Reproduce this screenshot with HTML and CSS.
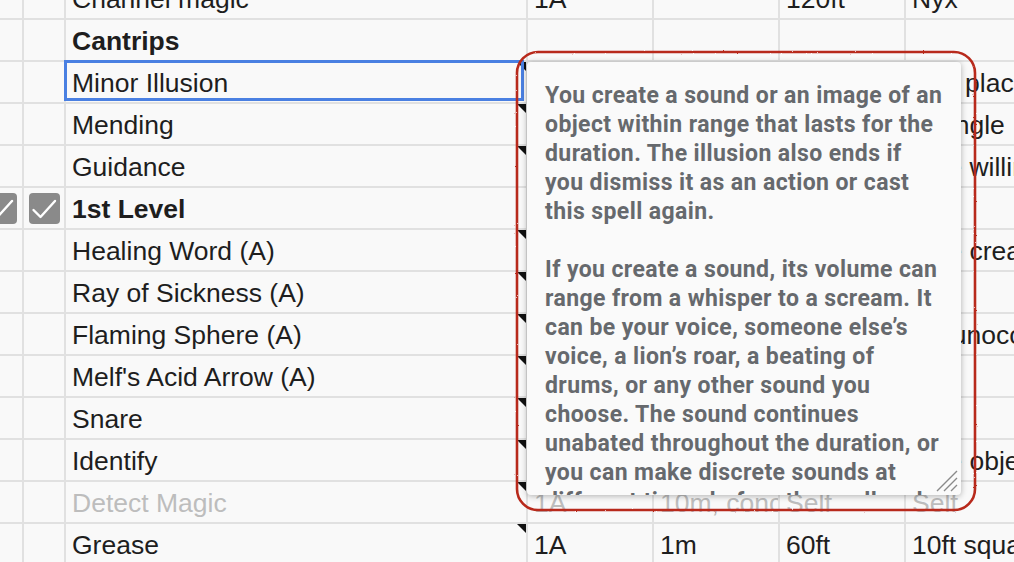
FILE: index.html
```html
<!DOCTYPE html>
<html>
<head>
<meta charset="utf-8">
<title>Spells</title>
<link rel="stylesheet" href="styles.css">
</head>
<body>
<div class="sheet">
  <div class="row">
    <div class="cell"></div><div class="cell"></div>
    <div class="cell">Channel magic</div>
    <div class="cell">1A</div><div class="cell"></div><div class="cell">120ft</div><div class="cell">Nyx</div>
  </div>
  <div class="row">
    <div class="cell"></div><div class="cell"></div>
    <div class="cell bold">Cantrips</div>
    <div class="cell"></div><div class="cell"></div><div class="cell"></div><div class="cell"></div>
  </div>
  <div class="row">
    <div class="cell"></div><div class="cell"></div>
    <div class="cell selected has-note">Minor Illusion</div>
    <div class="cell">1A</div><div class="cell">1m</div><div class="cell">30ft</div><div class="cell">Any place</div>
  </div>
  <div class="row">
    <div class="cell"></div><div class="cell"></div>
    <div class="cell has-note">Mending</div>
    <div class="cell">1m</div><div class="cell">Inst</div><div class="cell">Touch</div><div class="cell">A single</div>
  </div>
  <div class="row">
    <div class="cell"></div><div class="cell"></div>
    <div class="cell has-note">Guidance</div>
    <div class="cell">1A</div><div class="cell">1m, conc</div><div class="cell">Touch</div><div class="cell">One willing creature</div>
  </div>
  <div class="row">
    <div class="cell box-cell"><span class="check"><svg viewBox="0 0 31 31"><path d="M4.5 17 L11.5 24 L26 8"/></svg></span></div>
    <div class="cell box-cell"><span class="check"><svg viewBox="0 0 31 31"><path d="M4.5 17 L11.5 24 L26 8"/></svg></span></div>
    <div class="cell bold">1st Level</div>
    <div class="cell"></div><div class="cell"></div><div class="cell"></div><div class="cell"></div>
  </div>
  <div class="row">
    <div class="cell"></div><div class="cell"></div>
    <div class="cell has-note">Healing Word (A)</div>
    <div class="cell">1BA</div><div class="cell">Inst</div><div class="cell">60ft</div><div class="cell">One creature</div>
  </div>
  <div class="row">
    <div class="cell"></div><div class="cell"></div>
    <div class="cell has-note">Ray of Sickness (A)</div>
    <div class="cell">1A</div><div class="cell">Inst</div><div class="cell">60ft</div><div class="cell"></div>
  </div>
  <div class="row">
    <div class="cell"></div><div class="cell"></div>
    <div class="cell has-note">Flaming Sphere (A)</div>
    <div class="cell">1A</div><div class="cell">1m, conc</div><div class="cell">60ft</div><div class="cell">An unoccupied space</div>
  </div>
  <div class="row">
    <div class="cell"></div><div class="cell"></div>
    <div class="cell has-note">Melf's Acid Arrow (A)</div>
    <div class="cell">1A</div><div class="cell">Inst</div><div class="cell">90ft</div><div class="cell"></div>
  </div>
  <div class="row">
    <div class="cell"></div><div class="cell"></div>
    <div class="cell has-note">Snare</div>
    <div class="cell">1m</div><div class="cell">8h</div><div class="cell">Touch</div><div class="cell"></div>
  </div>
  <div class="row">
    <div class="cell"></div><div class="cell"></div>
    <div class="cell has-note">Identify</div>
    <div class="cell">1m</div><div class="cell">Inst</div><div class="cell">Touch</div><div class="cell">One object</div>
  </div>
  <div class="row muted">
    <div class="cell"></div><div class="cell"></div>
    <div class="cell has-note">Detect Magic</div>
    <div class="cell">1A</div><div class="cell">10m, conc</div><div class="cell">Self</div><div class="cell">Self</div>
  </div>
  <div class="row">
    <div class="cell"></div><div class="cell"></div>
    <div class="cell has-note">Grease</div>
    <div class="cell">1A</div><div class="cell">1m</div><div class="cell">60ft</div><div class="cell">10ft square</div>
  </div>
</div>

<div class="note">
  <p>You create a sound or an image of an object within range that lasts for the duration. The illusion also ends if you dismiss it as an action or cast this spell again.</p>
  <p>If you create a sound, its volume can range from a whisper to a scream. It can be your voice, someone else’s voice, a lion’s roar, a beating of drums, or any other sound you choose. The sound continues unabated throughout the duration, or you can make discrete sounds at different times before the spell ends.</p>
  <svg class="grip" viewBox="0 0 24 24"><path d="M23 3 L3 23 M23 10 L10 23 M23 17 L17 23"/></svg>
</div>

<svg class="annotation" viewBox="0 0 1014 562">
  <defs>
    <filter id="rough" x="-5%" y="-5%" width="110%" height="110%">
      <feTurbulence type="fractalNoise" baseFrequency="0.9" numOctaves="2" result="n"/>
      <feDisplacementMap in="SourceGraphic" in2="n" scale="1.8"/>
    </filter>
  </defs>
  <rect x="517" y="52" width="458" height="458" rx="21" ry="21"/>
</svg>
</body>
</html>
```

FILE: styles.css
```css
html, body {
  margin: 0;
  height: 100%;
  overflow: hidden;
  background: #f9f9f9;
}

body {
  position: relative;
  font-family: "Liberation Sans", Arial, sans-serif;
}

.sheet {
  margin: -22px 0 0 -20px;
}

.row {
  display: grid;
  grid-template-columns: 44px 42px 462px 126px 126px 126px 220px;
  height: 42px;
}

.cell {
  position: relative;
  box-sizing: border-box;
  display: flex;
  align-items: flex-end;
  padding: 0 0 4px 6px;
  border-right: 2px solid #e1e1e1;
  border-bottom: 2px solid #e1e1e1;
  font-size: 26.5px;
  line-height: 30px;
  color: #1e1e1e;
  white-space: nowrap;
  overflow: hidden;
}

.bold {
  font-weight: 700;
}

.muted .cell {
  color: #bdbdbd;
}

.has-note::before {
  content: "";
  position: absolute;
  top: 0;
  right: 0;
  width: 9px;
  height: 9px;
  background: #111;
  clip-path: polygon(0 0, 100% 0, 100% 100%);
}

.selected {
  overflow: visible;
  z-index: 2;
}

.selected::after {
  content: "";
  position: absolute;
  left: -2px;
  top: -2px;
  right: 2px;
  bottom: 1px;
  border: 3px solid #4a80e2;
  pointer-events: none;
}

.box-cell {
  align-items: center;
  justify-content: center;
  padding: 0;
}

.check {
  display: block;
  width: 31px;
  height: 31px;
  border-radius: 4px;
  background: #8a8a8a;
}

.check svg {
  display: block;
  width: 31px;
  height: 31px;
  fill: none;
  stroke: #fff;
  stroke-width: 2.4;
  stroke-linecap: round;
  stroke-linejoin: round;
}

.note {
  position: absolute;
  left: 527px;
  top: 62px;
  width: 434px;
  height: 433px;
  box-sizing: border-box;
  padding: 19px 17px 0 18px;
  background: #fafafa;
  border-radius: 4px;
  box-shadow: 0 1px 6px rgba(0, 0, 0, 0.3);
  overflow: hidden;
  z-index: 5;
  font-family: Roboto, "Liberation Sans", sans-serif;
  font-weight: 700;
  font-size: 23px;
  letter-spacing: 0.4px;
  line-height: 29px;
  color: #66696d;
}

.note p {
  margin: 0 0 29px 0;
}

.grip {
  position: absolute;
  right: 3px;
  bottom: 3px;
  width: 24px;
  height: 24px;
  fill: none;
  stroke: #8a8a8a;
  stroke-width: 1.4;
}

.annotation {
  position: absolute;
  left: 0;
  top: 0;
  width: 1014px;
  height: 562px;
  z-index: 10;
  pointer-events: none;
}

.annotation rect {
  fill: none;
  stroke: #b8291b;
  stroke-width: 2.6;
  filter: url(#rough);
}
```
